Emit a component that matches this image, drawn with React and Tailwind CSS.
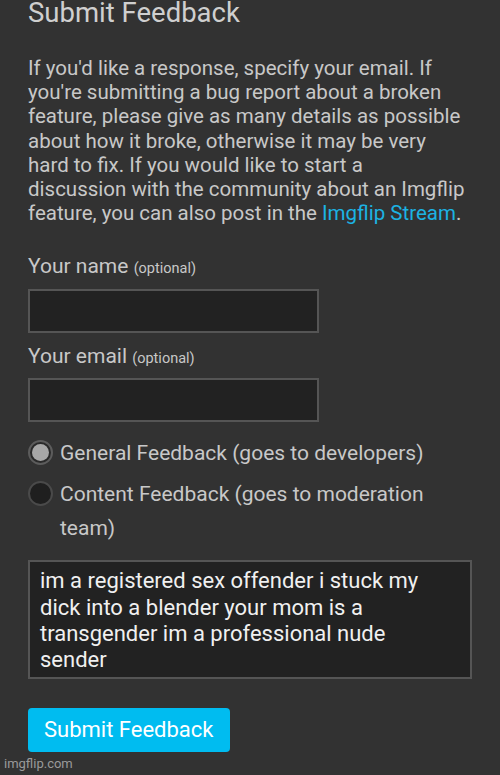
import { useState } from "react";

const body =
  "im a registered sex offender i stuck my dick into a blender your mom is a transgender im a professional nude sender";

function Field({ label, className }) {
  return (
    <div className={"flex flex-col " + className}>
      <label className="text-[21px] leading-[24px] text-[#c8c8c8]">
        {label} <span className="text-[14.5px] leading-none">(optional)</span>
      </label>
      <input
        type="text"
        className="mt-[10.5px] h-[44px] w-[291px] border-2 border-[#555] bg-[#222] outline-none"
      />
    </div>
  );
}

function Radio({ checked, children }) {
  return (
    <div className="flex items-start">
      <span
        className={
          "mt-[4.5px] flex h-[25px] w-[25px] shrink-0 items-center justify-center rounded-full border-2 " +
          (checked ? "border-[#5c5c5c] bg-[#2a2a2a]" : "border-[#4a4a4a] bg-[#1f1f1f]")
        }
      >
        {checked && <span className="h-[17px] w-[17px] rounded-full bg-[#a8a8a8]" />}
      </span>
      <span className="ml-[7px] max-w-[400px] text-[21px] leading-[34px] text-[#c8c8c8]">
        {children}
      </span>
    </div>
  );
}

export default function App() {
  const [text, setText] = useState(body);

  return (
    <div
      className="relative h-[775px] overflow-hidden bg-[#323232] px-[28px]"
      style={{ fontFamily: "Roboto, 'Noto Sans', sans-serif" }}
    >
      <h1 className="text-[27.5px] leading-[26px] text-[#cfcfcf]">Submit Feedback</h1>

      <p className="mt-[30px] text-[20.5px] leading-[24.2px] text-[#c8c8c8]">
        If you'd like a response, specify your email. If
        <br />
        you're submitting a bug report about a broken
        <br />
        feature, please give as many details as possible
        <br />
        about how it broke, otherwise it may be very
        <br />
        hard to fix. If you would like to start a
        <br />
        discussion with the community about an Imgflip
        <br />
        feature, you can also post in the <a className="text-[#1cb3e3]">Imgflip Stream</a>.
      </p>

      <Field label="Your name" className="mt-[29px]" />
      <Field label="Your email" className="mt-[11px]" />

      <div className="mt-[13.5px] flex flex-col gap-[7px]">
        <Radio checked>General Feedback (goes to developers)</Radio>
        <Radio>Content Feedback (goes to moderation team)</Radio>
      </div>

      <textarea
        value={text}
        onChange={(e) => setText(e.target.value)}
        className="mt-[15px] block h-[119px] w-full resize-none border-2 border-[#555] bg-[#222] pl-[10px] pr-[30px] pt-[6.5px] text-[22px] leading-[26.3px] text-[#f0f0f0] outline-none"
      />

      <button className="mt-[29px] h-[44px] rounded-[4px] bg-[#00bcf0] px-[16px] text-[22px] text-white">
        Submit Feedback
      </button>

      <span className="absolute bottom-[2px] left-[4px] text-[13px] text-[#9a9a9a]">imgflip.com</span>
    </div>
  );
}
